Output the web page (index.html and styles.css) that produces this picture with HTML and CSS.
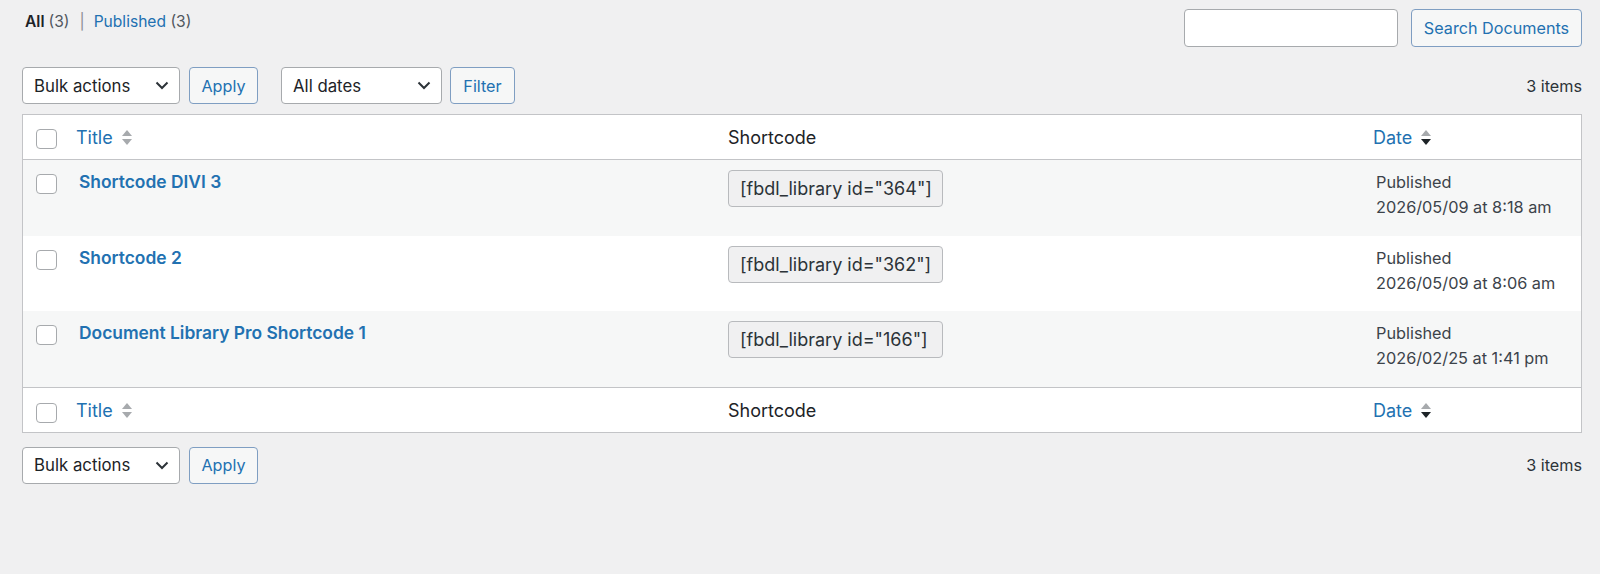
FILE: index.html
```html
<html>
<head>
    <meta charset="utf-8">
    <link rel="stylesheet" href="styles.css">
</head>
<body>
<div class="wrap">

    <!-- views + search -->
    <div class="top_bar">
        <ul class="views">
            <li class="current">All <span class="count">(3)</span></li>
            <li class="sep">|</li>
            <li><a href="#">Published</a> <span class="count">(3)</span></li>
        </ul>
        <div class="search_box">
            <input type="search" class="search_in">
            <button class="btn search_btn">Search Documents</button>
        </div>
    </div>

    <!-- top table nav -->
    <div class="tablenav">
        <div class="actions">
            <div class="fake_select bulk">
                <span>Bulk actions</span>
                <svg width="14" height="9" viewBox="0 0 14 9"><path d="M1.5 1.5 7 7l5.5-5.5" fill="none" stroke="#2c3338" stroke-width="2"/></svg>
            </div>
            <button class="btn apply">Apply</button>
            <div class="fake_select dates">
                <span>All dates</span>
                <svg width="14" height="9" viewBox="0 0 14 9"><path d="M1.5 1.5 7 7l5.5-5.5" fill="none" stroke="#2c3338" stroke-width="2"/></svg>
            </div>
            <button class="btn filter">Filter</button>
        </div>
        <div class="num">3 items</div>
    </div>

    <table class="list">
        <colgroup>
            <col class="c_cb"><col class="c_title"><col class="c_code"><col class="c_date">
        </colgroup>
        <thead>
            <tr>
                <th class="cb"><span class="chk"></span></th>
                <th class="title"><a href="#">Title</a><svg class="sort" width="10" height="15" viewBox="0 0 10 15"><path d="M5 0l5 6H0z" fill="#a7aaad"/><path d="M5 15l5-6H0z" fill="#a7aaad"/></svg></th>
                <th class="code">Shortcode</th>
                <th class="date"><a href="#">Date</a><svg class="sort" width="10" height="15" viewBox="0 0 10 15"><path d="M5 0l5 6H0z" fill="#a7aaad"/><path d="M5 15l5-6H0z" fill="#1d2327"/></svg></th>
            </tr>
        </thead>
        <tbody>
            <tr class="alt">
                <td class="cb"><span class="chk"></span></td>
                <td class="title"><a href="#">Shortcode DIVI 3</a></td>
                <td class="code"><div class="code_box">[fbdl_library id="364"]</div></td>
                <td class="date">Published<br>2026/05/09 at 8:18 am</td>
            </tr>
            <tr>
                <td class="cb"><span class="chk"></span></td>
                <td class="title"><a href="#">Shortcode 2</a></td>
                <td class="code"><div class="code_box">[fbdl_library id="362"]</div></td>
                <td class="date">Published<br>2026/05/09 at 8:06 am</td>
            </tr>
            <tr class="alt">
                <td class="cb"><span class="chk"></span></td>
                <td class="title"><a href="#">Document Library Pro Shortcode 1</a></td>
                <td class="code"><div class="code_box">[fbdl_library id="166"]</div></td>
                <td class="date">Published<br>2026/02/25 at 1:41 pm</td>
            </tr>
        </tbody>
        <tfoot>
            <tr>
                <th class="cb"><span class="chk"></span></th>
                <th class="title"><a href="#">Title</a><svg class="sort" width="10" height="15" viewBox="0 0 10 15"><path d="M5 0l5 6H0z" fill="#a7aaad"/><path d="M5 15l5-6H0z" fill="#a7aaad"/></svg></th>
                <th class="code">Shortcode</th>
                <th class="date"><a href="#">Date</a><svg class="sort" width="10" height="15" viewBox="0 0 10 15"><path d="M5 0l5 6H0z" fill="#a7aaad"/><path d="M5 15l5-6H0z" fill="#1d2327"/></svg></th>
            </tr>
        </tfoot>
    </table>

    <!-- bottom table nav -->
    <div class="tablenav bottom">
        <div class="actions">
            <div class="fake_select bulk">
                <span>Bulk actions</span>
                <svg width="14" height="9" viewBox="0 0 14 9"><path d="M1.5 1.5 7 7l5.5-5.5" fill="none" stroke="#2c3338" stroke-width="2"/></svg>
            </div>
            <button class="btn apply">Apply</button>
        </div>
        <div class="num">3 items</div>
    </div>

</div>
</body>
</html>
```

FILE: styles.css
```css
body {
    margin: 0;
    background-color: #f0f0f1;
    font-family: Inter, "Liberation Sans", sans-serif;
    font-size: 16.8px;
    color: #3c434a;
}

a {
    color: #2271b1;
    text-decoration: none;
}

.wrap {
    padding: 9px 18px 0 22px;
}

/* top bar */
.top_bar {
    display: flex;
    justify-content: space-between;
    align-items: flex-start;
}

.views {
    list-style: none;
    margin: 0;
    padding: 0 0 0 3px;
    display: flex;
    line-height: 26px;
    font-size: 15.6px;
}

.views li {
    white-space: pre;
}

.views .current {
    color: #1d2327;
    font-weight: 600;
}

.views .count {
    color: #50575e;
    font-weight: 400;
}

.views .sep {
    color: #8c8f94;
    padding: 0 9px 0 10px;
}

.search_box {
    display: flex;
    gap: 13px;
}

.search_in {
    width: 214px;
    height: 38px;
    box-sizing: border-box;
    border: 1px solid #a7aaad;
    border-radius: 4px;
    background: #fff;
    outline: none;
    margin: 0;
}

.btn {
    font-family: inherit;
    font-size: 16.2px;
    color: #2271b1;
    background-color: #f6f7f7;
    border: 1px solid #7f9ec2;
    border-radius: 4px;
    box-sizing: border-box;
    height: 37px;
    padding: 0;
    margin: 0;
}

.search_btn {
    width: 171px;
    height: 38px;
}

/* table nav */
.tablenav {
    display: flex;
    justify-content: space-between;
    align-items: center;
    margin-top: 20px;
    height: 37px;
}

.tablenav.bottom {
    margin-top: 14px;
}

.actions {
    display: flex;
    align-items: center;
}

.fake_select {
    display: flex;
    align-items: center;
    justify-content: space-between;
    height: 37px;
    box-sizing: border-box;
    border: 1px solid #a7aaad;
    border-radius: 4px;
    background: #fff;
    color: #1d2327;
    padding: 0 10px 0 11px;
}

.fake_select.bulk {
    width: 158px;
}

.fake_select.dates {
    width: 161px;
    margin-left: 23px;
}

.apply {
    width: 69px;
    margin-left: 9px;
}

.filter {
    width: 65px;
    margin-left: 8px;
}

.num {
    color: #2c3338;
    font-size: 16.2px;
}

/* list table */
.list {
    margin-top: 10px;
    width: 1560px;
    table-layout: fixed;
    border-collapse: separate;
    border-spacing: 0;
    border: 1px solid #c3c4c7;
    background: #fff;
}

.c_cb { width: 43px; }
.c_title { width: 650px; }
.c_code { width: 648px; }

.list th {
    height: 45px;
    font-weight: 400;
    font-size: 18px;
    text-align: left;
    color: #1d2327;
    padding: 0;
    vertical-align: middle;
}

.list thead th {
    border-bottom: 1px solid #c3c4c7;
}

.list tfoot th {
    border-top: 1px solid #c3c4c7;
    padding-top: 2px;
}

.list th.title { padding-left: 10px; }
.list th.code { padding-left: 12px; }
.list th.date { padding-left: 9px; }

.list th a,
.list th .sort {
    vertical-align: middle;
}

.sort {
    margin-left: 9px;
}

.list td {
    height: 75.5px;
    box-sizing: border-box;
    padding: 10px 0 0 0;
    vertical-align: top;
    line-height: 24px;
}

.list tr.alt td {
    background: #f6f7f7;
}

.cb {
    padding-left: 13px !important;
}

.chk {
    display: block;
    width: 21px;
    height: 20px;
    box-sizing: border-box;
    border: 1px solid #a7aaad;
    border-radius: 4px;
    background: #fff;
}

th.cb .chk {
    margin-top: 4px;
}

td.cb .chk {
    margin-top: 4px;
}

td.title {
    padding-left: 13px;
    font-weight: 600;
    font-size: 17.4px;
}

td.code {
    padding-left: 12px;
}

.code_box {
    width: 215px;
    height: 37px;
    box-sizing: border-box;
    border: 1px solid #b8babd;
    border-radius: 4px;
    background: #f0f0f1;
    color: #2c3338;
    font-size: 18px;
    line-height: 35px;
    padding-left: 11px;
    white-space: nowrap;
}

td.date {
    padding-left: 12px;
    line-height: 25px;
    font-size: 16.3px;
    color: #3c434a;
}
```
